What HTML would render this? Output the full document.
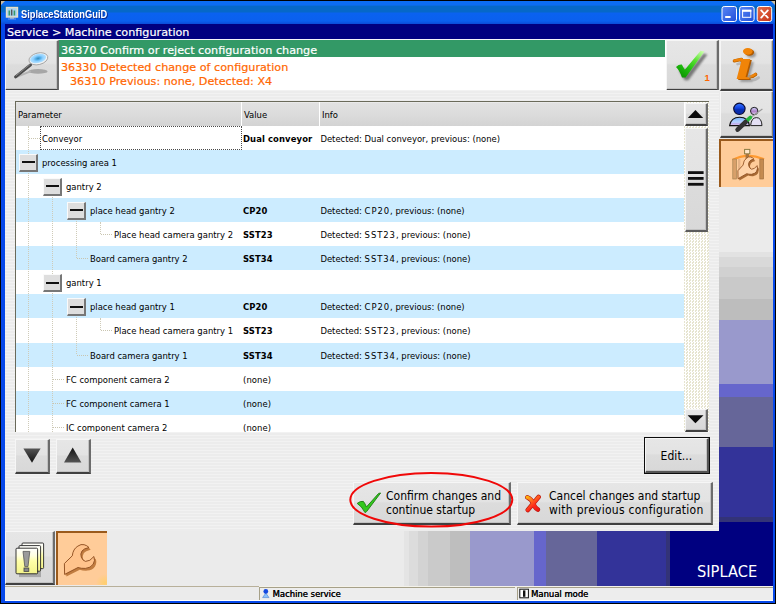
<!DOCTYPE html>
<html>
<head>
<meta charset="utf-8">
<title>SiplaceStationGuiD</title>
<style>
*{box-sizing:border-box;margin:0;padding:0}
html,body{width:776px;height:604px;overflow:hidden;background:#000}
body{position:relative;font-family:"DejaVu Sans Condensed","Liberation Sans",sans-serif;font-size:9.4px;color:#000}
.v{font-family:"DejaVu Sans","Liberation Sans",sans-serif;font-size:11.2px;-webkit-text-stroke:0.2px}
.a{position:absolute}
.t{position:absolute;white-space:nowrap;line-height:1}
#win{left:1px;top:1px;width:774px;height:602px;background:#0648ea}
#title{left:1px;top:1px;width:774px;height:23px;background:linear-gradient(#0c6cf2 0,#0c6cf2 4.2px,#0668c8 5px,#0668c8 11px,#0a62f0 12px,#0a60ee 20px,#0a4cd8 23px)}
#navy{left:5px;top:24px;width:768px;height:15px;background:#000080}
#client{left:5px;top:39px;width:768px;height:561px;background:#ebebeb}
.btn{position:absolute;background:linear-gradient(#e6e6e6 0,#e3e3e3 46%,#dcdcdc 50%,#d8d8d8 100%);border-top:1px solid #f6f6f6;border-left:1px solid #f6f6f6;border-right:2px solid #6c6c6c;border-bottom:2px solid #404040;box-shadow:inset -1px -1px 0 #c2c2c2}
.sel{position:absolute;background:#ffcc99;border-top:2px solid #9a5a1c;border-left:2px solid #9a5a1c}
svg{position:absolute;overflow:visible}
.row{position:absolute;left:16px;width:669px;height:24.1px}
.b{background:#ccecff}
.w{background:#fff}
.c1,.c2,.c3{position:absolute;white-space:nowrap;line-height:24px;top:1px;font-size:9.4px}
.c2{left:227px;font-weight:bold;letter-spacing:0.1px}
.c3{left:304.4px}
.u{letter-spacing:0.95px}
.n{font-weight:normal}
.exp{position:absolute;z-index:2;top:4px;width:19px;height:18px;background:#dedede;border-top:1px solid #fafafa;border-left:1px solid #fafafa;border-right:2px solid #777;border-bottom:2px solid #777}
.exp i{position:absolute;left:1.6px;top:6.4px;width:13.4px;height:2px;background:#111}
.dv{position:absolute;width:0;border-left:1px dotted #cfcbb8}
.dh{position:absolute;height:0;border-top:1px dotted #c9c5b0}
</style>
</head>
<body>
<div class="a" id="win"></div>
<div class="a" id="title"></div>
<div class="t" style="left:21px;top:9px;font-family:'Liberation Sans',sans-serif;font-size:10.5px;font-weight:bold;color:#fff;transform-origin:0 0;transform:scaleX(0.885);text-shadow:1px 1px 0 #0a2a8c">SiplaceStationGuiD</div>
<!-- title icon -->
<svg style="left:6px;top:7px" width="13" height="13" viewBox="0 0 13 13"><rect x="0.5" y="0.5" width="11" height="9.5" fill="#a8d4f0" stroke="#e6dfc8" stroke-width="1.4"/><rect x="2.5" y="3.5" width="1.6" height="5" fill="#3a9a6a"/><rect x="5" y="2.5" width="1.4" height="6" fill="#555"/><rect x="7.6" y="3.5" width="1.6" height="5" fill="#3a9a6a"/><rect x="4" y="10.6" width="4" height="1" fill="#d8d0b8"/><rect x="2" y="11.6" width="8" height="0.8" fill="#8aa8e8"/></svg>
<!-- caption buttons -->
<svg style="left:721px;top:6px" width="52" height="16" viewBox="0 0 52 16">
<defs><linearGradient id="cb" x1="0" y1="0" x2="1" y2="1"><stop offset="0" stop-color="#5a86f6"/><stop offset="1" stop-color="#1f4fd8"/></linearGradient><linearGradient id="cr" x1="0" y1="0" x2="1" y2="1"><stop offset="0" stop-color="#e8704a"/><stop offset="1" stop-color="#c43218"/></linearGradient></defs>
<rect x="1" y="0.5" width="14.5" height="15" rx="2.2" fill="url(#cb)" stroke="#fff" stroke-width="1"/><rect x="4.2" y="10" width="5.4" height="2" fill="#fff"/>
<rect x="18.6" y="0.5" width="14.5" height="15" rx="2.2" fill="url(#cb)" stroke="#fff" stroke-width="1"/><rect x="21.6" y="4.3" width="8.2" height="7" fill="none" stroke="#fff" stroke-width="1"/><rect x="21.1" y="3.8" width="9.2" height="2" fill="#fff"/>
<rect x="36.2" y="0.5" width="14.5" height="15" rx="2.2" fill="url(#cr)" stroke="#fff" stroke-width="1"/><path d="M40.2 4.4 L46.8 11.6 M46.8 4.4 L40.2 11.6" stroke="#fff" stroke-width="1.8" stroke-linecap="round"/>
</svg>
<div class="a" style="left:1px;top:1px;width:0;height:0;border-top:4px solid #c9bda2;border-right:4px solid transparent"></div>
<div class="a" style="left:771px;top:1px;width:0;height:0;border-top:4px solid #c9bda2;border-left:4px solid transparent"></div>
<div class="a" id="navy"></div>
<div class="t v" style="left:7px;top:27px;color:#fff">Service &gt; Machine configuration</div>
<div class="a" id="client"></div>
<div class="a" style="left:5px;top:39px;width:768px;height:1px;background:#f4f4fa"></div>

<!-- message area -->
<div class="a" style="left:58.8px;top:40px;width:607.2px;height:50px;background:#fff"></div>
<div class="a" style="left:58.8px;top:40.4px;width:606.2px;height:16.6px;background:#339966"></div>
<div class="t v" style="left:61px;top:45px;color:#fff">36370 Confirm or reject configuration change</div>
<div class="t v" style="left:61px;top:62px;color:#ff6600">36330 Detected change of configuration</div>
<div class="t v" style="left:70px;top:76px;color:#ff6600">36310 Previous: none, Detected: X4</div>

<!-- top buttons -->
<div class="btn" style="left:5px;top:40px;width:53.8px;height:50.8px"></div>
<svg style="left:5px;top:40px" width="53" height="51" viewBox="0 0 53 51">
<defs><radialGradient id="lens" cx="0.5" cy="0.5" r="0.5"><stop offset="0" stop-color="#3a8ab8"/><stop offset="0.3" stop-color="#55b0e8"/><stop offset="0.6" stop-color="#8fd0ff"/><stop offset="1" stop-color="#b4e2ff"/></radialGradient></defs>
<ellipse cx="33" cy="31.4" rx="9.6" ry="2.3" fill="#a6a6a6"/>
<path d="M10.5 37.2 L25 31.6" stroke="#b4b4b4" stroke-width="2" stroke-linecap="round"/>
<path d="M10.6 36.8 L25.6 24.8" stroke="#4a4a4a" stroke-width="3" stroke-linecap="round"/>
<path d="M11.2 35.6 L25 24.6" stroke="#8a8a8a" stroke-width="0.9" stroke-linecap="round"/>
<g transform="rotate(-14 33.4 18.8)"><ellipse cx="33.4" cy="18.8" rx="9.6" ry="5.8" fill="#f2f2f2" stroke="#9a9a9a" stroke-width="0.8"/><ellipse cx="33.2" cy="18.4" rx="8.2" ry="4.5" fill="url(#lens)"/></g>
</svg>
<div class="btn" style="left:666px;top:40.4px;width:52.8px;height:50.2px"></div>
<svg style="left:666px;top:40px" width="53" height="51" viewBox="0 0 53 51">
<defs><linearGradient id="gchk" x1="0.2" y1="1" x2="0.9" y2="0"><stop offset="0" stop-color="#0a9400"/><stop offset="0.35" stop-color="#22c010"/><stop offset="0.65" stop-color="#58e030"/><stop offset="1" stop-color="#c8ffa8"/></linearGradient><filter id="bl" x="-20%" y="-20%" width="140%" height="140%"><feGaussianBlur stdDeviation="0.9"/></filter></defs>
<path d="M13 30.5 L18.5 28 L21.4 33 L37.6 13.6 L41.4 14.6 L22.4 40.2 L18.6 40.2 Z" fill="#666" filter="url(#bl)" opacity="0.85"/>
<path d="M10 27 Q13 24.2 15.8 24.6 L18.8 29.8 L34.6 10.8 L38.4 11.6 L19.6 37.4 L16 37.4 Q13.6 30.6 10 27 Z" fill="url(#gchk)"/>
<text x="38.6" y="41" font-family="Liberation Sans,sans-serif" font-size="9.5" font-weight="bold" fill="#ff6600">1</text>
</svg>
<div class="btn" style="left:720px;top:40.4px;width:53px;height:50.2px;border-right:1px solid #857c6c"></div>
<svg style="left:720px;top:40px" width="53" height="51" viewBox="0 0 53 51"><g fill="none" stroke-linecap="round"><path d="M15.4 21.6 L21.4 20.2 M27.6 37.4 Q32.6 38.4 36.4 35.2" stroke="#9a9a9a" stroke-width="2.8" transform="translate(2.2 2.4)" opacity="0.55"/><path d="M14.4 20.8 L21.4 19.4 M26.6 36.6 Q32 37.8 35.6 34.4" stroke="#b86200" stroke-width="3.4"/><path d="M14.4 20.6 L21.4 19.2 M26.6 36.2 Q32 37.4 35.4 34.2" stroke="#f08408" stroke-width="2.4"/></g></svg>
<div class="t" style="left:725px;top:45px;width:38px;text-align:center;font-family:'Liberation Serif',serif;font-style:italic;font-weight:bold;font-size:46px;line-height:40px;color:#f08408;text-shadow:1px 1px 0 #b05a00,2.5px 2.5px 2px #9a9a9a;transform-origin:50% 50%;transform:scale(1.4,0.95)">i</div>
<div class="btn" style="left:720px;top:91px;width:53px;height:47px;border-right:1px solid #857c6c"></div>
<svg style="left:720px;top:91px" width="53" height="47" viewBox="0 0 53 47">
<defs><linearGradient id="hd" x1="0" y1="0" x2="0" y2="1"><stop offset="0" stop-color="#3a78ff"/><stop offset="0.45" stop-color="#1040e0"/><stop offset="0.55" stop-color="#0830b8"/><stop offset="1" stop-color="#0a2aa0"/></linearGradient>
<linearGradient id="bd" x1="0" y1="0" x2="0" y2="1"><stop offset="0" stop-color="#78b4ff"/><stop offset="0.6" stop-color="#b8d4ff"/><stop offset="0.8" stop-color="#c0a8e8"/><stop offset="1" stop-color="#e8e0ff"/></linearGradient>
<linearGradient id="hd2" x1="0" y1="0" x2="0" y2="1"><stop offset="0" stop-color="#d0d8ff"/><stop offset="0.55" stop-color="#b080c8"/><stop offset="1" stop-color="#e0d0f0"/></linearGradient></defs>
<path d="M30.6 34.6 Q31.4 26.6 36.4 26.6 Q41.6 26.6 42 34.6 Z" fill="#e4e0f4" stroke="#222" stroke-width="1"/>
<circle cx="34.2" cy="20" r="3.7" fill="url(#hd2)" stroke="#222" stroke-width="1"/>
<path d="M9.6 34.6 Q11 26.2 19.6 26.2 Q28.4 26.2 29.4 34.6 Z" fill="url(#bd)" stroke="#111" stroke-width="1.1"/>
<circle cx="19.4" cy="17.8" r="5.7" fill="url(#hd)" stroke="#0a0a30" stroke-width="1.1"/>
<path d="M30 27 L42.4 18" stroke="#9a9a9a" stroke-width="1.1"/>
<path d="M26 30.4 L30.4 26.4" stroke="#22b83a" stroke-width="3.6" stroke-linecap="round"/>
<path d="M17.6 38.6 L25.6 31" stroke="#333" stroke-width="4.6" stroke-linecap="round"/>
</svg>
<div class="sel" style="left:719px;top:139px;width:54px;height:48px"></div>
<svg style="left:719px;top:139px" width="54" height="48" viewBox="0 0 54 48">
<path d="M13.6 21 Q28 13 45 20.4" fill="none" stroke="#ff9a30" stroke-width="2.4"/>
<rect x="13.8" y="20" width="3.6" height="20" fill="#d8a06a" stroke="#9a7a4a" stroke-width="0.6"/>
<rect x="40.8" y="20" width="3.8" height="20" fill="#c48a50" stroke="#9a6a3a" stroke-width="0.6"/>
<rect x="19" y="20" width="2.4" height="16" fill="#e6b487"/>
<rect x="25.6" y="10.4" width="5.2" height="4.4" fill="#ffe6cc" stroke="#8a7a40" stroke-width="1"/>
<rect x="26.6" y="15" width="3.4" height="7" fill="#a8743c"/>
<g transform="translate(-19.7 8) scale(0.65 0.73)"><path d="M59.4 32.5 L67.3 24.8 Q68 18 72.9 15.1 Q76 12.8 79.1 13.7 Q82 14.4 84 16.5 Q78.6 17.6 77 20 Q75 23 76.3 26.2 Q77.6 29.6 80.5 30.4 Q85 30.6 88.9 25.5 Q90.4 29.6 88.2 33.2 Q85.6 37 80.5 37.4 Q76 37.6 73 36.5 L59.6 43.4 Z" fill="#a86a34" transform="translate(2.2 2.6)"/><path d="M59.4 32.5 L67.3 24.8 Q68 18 72.9 15.1 Q76 12.8 79.1 13.7 Q82 14.4 84 16.5 Q78.6 17.6 77 20 Q75 23 76.3 26.2 Q77.6 29.6 80.5 30.4 Q85 30.6 88.9 25.5 Q90.4 29.6 88.2 33.2 Q85.6 37 80.5 37.4 Q76 37.6 73 36.5 L59.6 43.4 Z" fill="#a86a34" transform="translate(1.1 1.3)"/><path d="M59.4 32.5 L67.3 24.8 Q68 18 72.9 15.1 Q76 12.8 79.1 13.7 Q82 14.4 84 16.5 Q78.6 17.6 77 20 Q75 23 76.3 26.2 Q77.6 29.6 80.5 30.4 Q85 30.6 88.9 25.5 Q90.4 29.6 88.2 33.2 Q85.6 37 80.5 37.4 Q76 37.6 73 36.5 L59.6 43.4 Z" fill="#ffd4aa" stroke="#8a4a1c" stroke-width="1.2" stroke-linejoin="round"/></g>
</svg>

<!-- right stripes -->
<div class="a" style="left:719px;top:187px;width:54px;height:399px;background:linear-gradient(#ebebeb 0,#ebebeb 65px,#e2e2e2 65px,#e2e2e2 70px,#d9d9d9 70px,#d9d9d9 80px,#d1d1d1 80px,#d1d1d1 90px,#c9c9c9 90px,#c9c9c9 112px,#bdbdbd 112px,#bdbdbd 133px,#9999cc 133px,#9999cc 197px,#6666cc 197px,#6666cc 210px,#666699 210px,#666699 260px,#333399 260px,#333399 330px,#333377 330px,#333377 335px,#000080 335px)"></div>
<!-- bottom stripes -->
<div class="a" style="left:5px;top:531px;width:768px;height:55px;background:linear-gradient(90deg,#ebebeb 0,#ebebeb 399px,#e4e4e4 399px,#e4e4e4 404px,#dcdcdc 404px,#dcdcdc 413px,#d3d3d3 413px,#d3d3d3 423px,#cacaca 423px,#cacaca 445px,#bebebe 445px,#bebebe 465px,#9999cc 465px,#9999cc 529px,#6666cc 529px,#6666cc 541px,#666699 541px,#666699 592px,#333399 592px,#333399 661px,#333377 661px,#333377 665.5px,#000080 665.5px)"></div>
<div class="t" style="left:697px;top:564px;font-size:16.3px;color:#fff">SIPLACE</div>

<!-- main panel -->
<div class="a" style="left:5px;top:90px;width:714px;height:441px;background:repeating-linear-gradient(#f2f2f2 0,#f2f2f2 1.5px,#ececec 1.5px,#ececec 3px)"></div>

<!-- table -->
<div class="a" style="left:15px;top:100.6px;width:693.6px;height:331.4px;background:#fff;border-left:1px solid #6a6a5a;border-top:1px solid #6a6a5a"></div>
<div class="a" style="left:16px;top:102px;width:669px;height:23.6px;background:linear-gradient(#efefef 0,#e1e1e1 1.2px,#dcdcdc 50%,#d3d3d3 100%)"></div>
<div class="a" style="left:241px;top:102px;width:1.2px;height:23.6px;background:#fff"></div>
<div class="a" style="left:318.8px;top:102px;width:1.2px;height:23.6px;background:#fff"></div>
<div class="t" style="left:18px;top:110px">Parameter</div>
<div class="t" style="left:244px;top:110px">Value</div>
<div class="t" style="left:322px;top:110px">Info</div>

<div id="rows" class="a" style="left:0;top:0;width:776px;height:432px;overflow:hidden">
<div class="row w" style="top:125.6px"><span class="c1" style="left:26px">Conveyor</span><span class="c2">Dual conveyor</span><span class="c3">Detected: Dual conveyor, previous: (none)</span></div>
<div class="row b" style="top:149.7px"><span class="exp" style="left:3px"><i></i></span><span class="c1" style="left:26px">processing area 1</span></div>
<div class="row w" style="top:173.8px"><span class="exp" style="left:27px"><i></i></span><span class="c1" style="left:50px">gantry 2</span></div>
<div class="row b" style="top:197.9px"><span class="exp" style="left:51px"><i></i></span><span class="c1" style="left:74px">place head gantry 2</span><span class="c2">CP20</span><span class="c3">Detected: <span class="u">CP20</span>, previous: (none)</span></div>
<div class="row w" style="top:222.0px"><span class="c1" style="left:98px">Place head camera gantry 2</span><span class="c2">SST23</span><span class="c3">Detected: <span class="u">SST23</span>, previous: (none)</span></div>
<div class="row b" style="top:246.1px"><span class="c1" style="left:74px">Board camera gantry 2</span><span class="c2">SST34</span><span class="c3">Detected: <span class="u">SST34</span>, previous: (none)</span></div>
<div class="row w" style="top:270.2px"><span class="exp" style="left:27px"><i></i></span><span class="c1" style="left:50px">gantry 1</span></div>
<div class="row b" style="top:294.3px"><span class="exp" style="left:51px"><i></i></span><span class="c1" style="left:74px">place head gantry 1</span><span class="c2">CP20</span><span class="c3">Detected: <span class="u">CP20</span>, previous: (none)</span></div>
<div class="row w" style="top:318.4px"><span class="c1" style="left:98px">Place head camera gantry 1</span><span class="c2">SST23</span><span class="c3">Detected: <span class="u">SST23</span>, previous: (none)</span></div>
<div class="row b" style="top:342.5px"><span class="c1" style="left:74px">Board camera gantry 1</span><span class="c2">SST34</span><span class="c3">Detected: <span class="u">SST34</span>, previous: (none)</span></div>
<div class="row w" style="top:366.6px"><span class="c1" style="left:50px">FC component camera 2</span><span class="c2 n">(none)</span></div>
<div class="row b" style="top:390.7px"><span class="c1" style="left:50px">FC component camera 1</span><span class="c2 n">(none)</span></div>
<div class="row w" style="top:414.8px"><span class="c1" style="left:50px">IC component camera 2</span><span class="c2 n">(none)</span></div>
<div class="dv" style="left:28px;top:125.6px;height:306.4px"></div>
<div class="dh" style="left:29px;top:137.6px;width:11px"></div>
<div class="dv" style="left:52px;top:185.8px;height:246.2px"></div>
<div class="dv" style="left:76px;top:209.9px;height:48.2px"></div>
<div class="dh" style="left:77px;top:258.1px;width:11px"></div>
<div class="dv" style="left:100px;top:222.0px;height:12.0px"></div>
<div class="dh" style="left:101px;top:234.0px;width:11px"></div>
<div class="dv" style="left:76px;top:306.3px;height:48.2px"></div>
<div class="dh" style="left:77px;top:354.5px;width:11px"></div>
<div class="dv" style="left:100px;top:318.4px;height:12.0px"></div>
<div class="dh" style="left:101px;top:330.4px;width:11px"></div>
<div class="dh" style="left:53px;top:378.6px;width:11px"></div>
<div class="dh" style="left:53px;top:402.7px;width:11px"></div>
<div class="dh" style="left:53px;top:426.8px;width:11px"></div>
</div>
<!-- focus rect -->
<div class="a" style="left:40px;top:126px;width:202px;height:24px;border:1px dotted #4a4a4a"></div>

<!-- scrollbar -->
<div class="a" style="left:684px;top:102px;width:24.6px;height:330px;background:repeating-conic-gradient(#ffffff 0 25%,#e6e4cf 0 50%) 0 0/3px 3px"></div><div class="a" style="left:684px;top:102px;width:1.2px;height:24px;background:#fff"></div>
<div class="btn" style="left:685px;top:103px;width:23px;height:22.6px"></div>
<div class="btn" style="left:685.4px;top:127.8px;width:22.6px;height:104px;border-bottom-color:#5c5c5c"></div>
<div class="btn" style="left:685px;top:408.8px;width:23px;height:23px"></div>
<svg style="left:685px;top:102px" width="24" height="330" viewBox="0 0 24 330">
<path d="M2.8 16 L10.45 8 L18.2 16 Z" fill="#0a0a0a"/>
<path d="M2.6 313.2 L18.5 313.2 L10.4 321.2 Z" fill="#0a0a0a"/>
<rect x="3" y="69.2" width="15.6" height="2.8" fill="#111"/><rect x="3" y="75" width="15.6" height="2.8" fill="#111"/><rect x="3" y="80.9" width="15.6" height="2.8" fill="#111"/>
</svg>

<!-- arrows + edit -->
<div class="btn" style="left:15px;top:439px;width:35px;height:35px"></div>
<div class="btn" style="left:56px;top:439px;width:35px;height:35px"></div>
<svg style="left:15px;top:439px" width="80" height="35" viewBox="0 0 80 35">
<defs><linearGradient id="tri" x1="0" y1="0" x2="0" y2="1"><stop offset="0" stop-color="#555"/><stop offset="1" stop-color="#111"/></linearGradient><linearGradient id="tri2" x1="0" y1="0" x2="0" y2="1"><stop offset="0" stop-color="#111"/><stop offset="1" stop-color="#555"/></linearGradient></defs>
<path d="M8.4 9.6 L25.6 9.6 L17 23.8 Z" fill="url(#tri)"/>
<path d="M49 23.6 L66.4 23.6 L57.7 8.4 Z" fill="url(#tri2)"/>
</svg>
<div class="a" style="left:644px;top:437px;width:66px;height:37px;background:#0c0c0c"></div>
<div class="btn" style="left:645px;top:438px;width:64px;height:35px;border-right-color:#555;border-bottom-color:#555"></div>
<div class="t" style="left:660.5px;top:450px;font-size:12px;letter-spacing:0.08px">Edit...</div>

<!-- confirm / cancel -->
<div class="btn" style="left:353px;top:482px;width:158px;height:43px"></div>
<div class="btn" style="left:517px;top:482px;width:196px;height:43px"></div>
<div class="t" style="left:386px;top:489px;font-size:12px;line-height:14px">Confirm changes and<br>continue startup</div>
<div class="t" style="left:549px;top:489px;font-size:12px;line-height:14px">Cancel changes and startup<br><span style="letter-spacing:0.26px">with previous configuration</span></div>
<svg style="left:340px;top:465px" width="220" height="70" viewBox="0 0 220 70">
<defs><linearGradient id="xg" gradientUnits="userSpaceOnUse" x1="186" y1="30" x2="200" y2="47"><stop offset="0" stop-color="#ffd000"/><stop offset="0.3" stop-color="#ff7a20"/><stop offset="0.6" stop-color="#ff2a1a"/><stop offset="1" stop-color="#e01010"/></linearGradient></defs>
<path d="M17.2 38.4 Q20.4 35.8 23.4 36.4 Q25.4 39 26.4 42 L38.6 28.4 L40.6 28 L26.6 46.6 L25 47.6 Q22 41.4 17.2 38.4 Z" fill="#33c81e" stroke="#1c7a12" stroke-width="0.9" stroke-linejoin="round"/>
<ellipse cx="91.3" cy="34.8" rx="81" ry="26.8" fill="none" stroke="#f00808" stroke-width="2"/>
<g fill="none" stroke-linecap="round"><path d="M187.4 32.4 Q191.6 34 193.4 39 Q195 43 197.8 44.6 M198.6 32 L187.8 45" stroke="#b81810" stroke-width="4.6"/><path d="M187.4 32.4 Q191.6 34 193.4 39 Q195 43 197.8 44.6 M198.6 32 L187.8 45" stroke="url(#xg)" stroke-width="3.4"/></g>
</svg>

<!-- bottom-left buttons -->
<div class="btn" style="left:5px;top:531px;width:50.4px;height:54px"></div>
<div class="sel" style="left:55.6px;top:531.4px;width:51.2px;height:53.6px;background:radial-gradient(circle at 47px 50px,#ffcf6e 0,#ffcc99 9px)"></div>
<svg style="left:5px;top:531px" width="102" height="54" viewBox="0 0 102 54">
<defs><linearGradient id="pg" x1="0" y1="0" x2="0" y2="1"><stop offset="0" stop-color="#ffffff"/><stop offset="0.3" stop-color="#ffffe0"/><stop offset="0.5" stop-color="#ffffa8"/><stop offset="1" stop-color="#f4f48a"/></linearGradient></defs>
<rect x="12.5" y="19" width="22" height="25.6" fill="#777" opacity="0.5" transform="translate(1.5 1.5)"/>
<rect x="17" y="12" width="21.6" height="25.6" rx="1" fill="url(#pg)" stroke="#222" stroke-width="0.9"/>
<rect x="14" y="14.6" width="21.6" height="25.6" rx="1" fill="url(#pg)" stroke="#222" stroke-width="0.9"/>
<rect x="11" y="17.2" width="21.6" height="25.6" rx="1" fill="url(#pg)" stroke="#222" stroke-width="0.9"/>
<path d="M18 20.4 L24.8 20.4 L23 35.6 L19.8 35.6 Z" fill="#9a9a9a" stroke="#555" stroke-width="0.8"/>
<rect x="19" y="37" width="4.8" height="3.4" fill="#888" stroke="#444" stroke-width="0.8"/>
<path d="M59.4 32.5 L67.3 24.8 Q68 18 72.9 15.1 Q76 12.8 79.1 13.7 Q82 14.4 84 16.5 Q78.6 17.6 77 20 Q75 23 76.3 26.2 Q77.6 29.6 80.5 30.4 Q85 30.6 88.9 25.5 Q90.4 29.6 88.2 33.2 Q85.6 37 80.5 37.4 Q76 37.6 73 36.5 L59.6 43.4 Z" fill="#c07c40" transform="translate(1.8 2.2)"/>
<path d="M59.4 32.5 L67.3 24.8 Q68 18 72.9 15.1 Q76 12.8 79.1 13.7 Q82 14.4 84 16.5 Q78.6 17.6 77 20 Q75 23 76.3 26.2 Q77.6 29.6 80.5 30.4 Q85 30.6 88.9 25.5 Q90.4 29.6 88.2 33.2 Q85.6 37 80.5 37.4 Q76 37.6 73 36.5 L59.6 43.4 Z" fill="#c07c40" transform="translate(0.9 1.1)"/>
<path d="M59.4 32.5 L67.3 24.8 Q68 18 72.9 15.1 Q76 12.8 79.1 13.7 Q82 14.4 84 16.5 Q78.6 17.6 77 20 Q75 23 76.3 26.2 Q77.6 29.6 80.5 30.4 Q85 30.6 88.9 25.5 Q90.4 29.6 88.2 33.2 Q85.6 37 80.5 37.4 Q76 37.6 73 36.5 L59.6 43.4 Z" fill="#ffc38c" stroke="#8a4a1c" stroke-width="0.9" stroke-linejoin="round"/>
</svg>

<!-- status bar -->
<div class="a" style="left:5px;top:586px;width:768px;height:14px;background:#ebebeb"></div>
<div class="a" style="left:5px;top:586px;width:254px;height:1px;background:#b8b09a"></div>
<div class="a" style="left:259px;top:587px;width:256px;height:13px;border-top:1px solid #a6a088;border-left:1px solid #a6a088;background:#ededed"></div>
<div class="a" style="left:517px;top:587px;width:256px;height:13px;border-top:1px solid #a6a088;border-left:1px solid #a6a088;background:#ededed"></div>
<div class="a" style="left:259px;top:586px;width:514px;height:1px;background:#f4f2ea"></div>
<div class="t" style="left:272.5px;top:589px;font-size:9.4px;text-shadow:0.3px 0 0 #000">Machine service</div>
<div class="t" style="left:531px;top:589px;font-size:9.4px;text-shadow:0.3px 0 0 #000">Manual mode</div>
<svg style="left:259px;top:587px" width="280" height="13" viewBox="0 0 280 13">
<path d="M3.6 10.6 L6.8 6 L10 10.6 Z" fill="#8ac0ff" stroke="#4a80d0" stroke-width="0.6"/>
<circle cx="6.8" cy="4.4" r="2.4" fill="#1448e0"/>
<rect x="260.8" y="2.2" width="8.6" height="8.6" fill="#fff" stroke="#111" stroke-width="1"/>
<rect x="264" y="3.4" width="2.4" height="6.4" fill="#111"/>
</svg>
<div class="a" style="left:5px;top:600px;width:768px;height:0.6px;background:#fff"></div>
</body>
</html>
